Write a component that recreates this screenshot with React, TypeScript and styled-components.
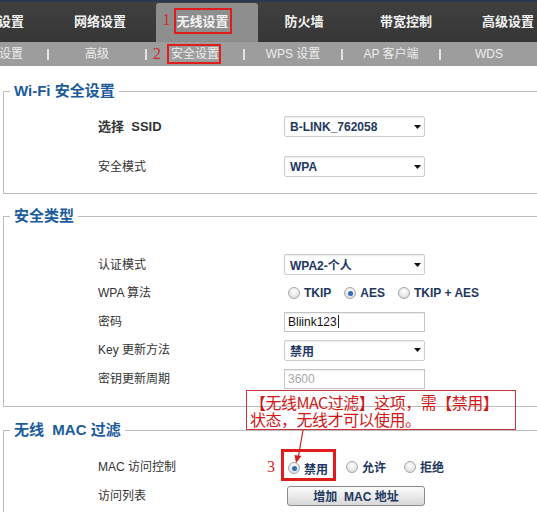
import React from "react";
import styled, { createGlobalStyle, css } from "styled-components";

const palette = {
  navy: "#1e3860",
  legend: "#1d5c9c",
  red: "#e01c1c",
  label: "#333333",
  line: "#bdbdbd",
};

const GlobalStyle = createGlobalStyle`
  body {
    margin: 0;
    background: #fff;
    font-family: "Liberation Sans", "Noto Sans CJK SC", sans-serif;
  }
`;

const Page = styled.div`
  position: relative;
  width: 537px;
  height: 512px;
  overflow: hidden;
  background: #fff;
`;

const TopNav = styled.div`
  height: 42px;
  overflow: hidden;
  background: linear-gradient(#2c3850 0, #2c3850 2px, #404040 2px, #363636 100%);
`;

const NavTrack = styled.div`
  display: flex;
  height: 100%;
  margin-left: -53px;
`;

const NavItem = styled.div<{ $active?: boolean }>`
  flex: 0 0 102px;
  box-sizing: border-box;
  margin-top: 3px;
  padding-bottom: 5px;
  display: flex;
  align-items: center;
  justify-content: center;
  color: #f2f2f2;
  font-family: "Noto Sans CJK SC", sans-serif;
  font-size: 13px;
  font-weight: 700;
  line-height: 17px;

  ${(p) =>
    p.$active &&
    css`
      margin: 3px -5px 0 5px;
      padding-right: 9px;
      background: #8e8e8e;
      border-radius: 3px 3px 0 0;
    `}
`;

const SubNav = styled.div`
  height: 24px;
  overflow: hidden;
  background: #9d9d9d;
`;

const SubTrack = styled.div`
  display: flex;
  height: 100%;
  margin-left: -50px;
`;

const SubItem = styled.div`
  position: relative;
  flex: 0 0 98px;
  display: flex;
  align-items: center;
  justify-content: center;
  color: #ededed;
  font-size: 12px;
  line-height: 16px;

  &:not(:last-child)::after {
    content: "";
    position: absolute;
    right: -1px;
    top: 7px;
    height: 11px;
    border-left: 2px solid #e4e4e4;
  }
`;

const Marked = styled.span<{ $inset: string; $width: number }>`
  position: relative;
  display: inline-block;

  &::after {
    content: "";
    position: absolute;
    inset: ${(p) => p.$inset};
    border: ${(p) => p.$width}px solid ${palette.red};
    pointer-events: none;
  }
`;

const StepNo = styled.span<{ $gap: number }>`
  position: absolute;
  right: calc(100% + ${(p) => p.$gap}px);
  top: 50%;
  transform: translateY(-50%);
  color: #d42a2a;
  font-family: "Liberation Serif", serif;
  font-size: 16px;
  font-weight: 400;
  line-height: 1;
`;

const Section = styled.fieldset<{ $top: number; $pad: string }>`
  width: 620px;
  margin: ${(p) => p.$top}px 0 0 3px;
  padding: ${(p) => p.$pad};
  border: 1px solid ${palette.line};
  border-right: none;
  min-width: 0;
`;

const Legend = styled.legend`
  padding: 0 4px;
  color: ${palette.legend};
  font-size: 15px;
  font-weight: 700;
  line-height: 20px;
`;

const Rows = styled.div<{ $gap: number }>`
  display: flex;
  flex-direction: column;
  gap: ${(p) => p.$gap}px;
  padding-left: 88px;
`;

const Row = styled.div`
  display: grid;
  grid-template-columns: 186px auto;
  align-items: center;
  min-height: 21px;
`;

const Label = styled.span<{ $bold?: boolean }>`
  color: ${palette.label};
  font-size: ${(p) => (p.$bold ? 13 : 12)}px;
  font-weight: ${(p) => (p.$bold ? 700 : 400)};
  line-height: 16px;
  white-space: pre;
`;

const SelectBox = styled.div`
  box-sizing: border-box;
  width: 141px;
  height: 21px;
  display: flex;
  align-items: center;
  justify-content: space-between;
  padding: 0 3px 0 5px;
  border: 1px solid #cdcdcd;
  border-radius: 2px;
  box-shadow: inset 0 1px 2px rgba(0, 0, 0, 0.08);
  color: ${palette.navy};
  font-size: 12px;
  font-weight: 700;
`;

const Field = styled.div<{ $disabled?: boolean }>`
  box-sizing: border-box;
  width: 141px;
  height: 20px;
  display: flex;
  align-items: center;
  padding: 0 3px;
  border: 1px solid #c4c4c4;
  box-shadow: inset 0 1px 1px rgba(0, 0, 0, 0.07);
  color: ${(p) => (p.$disabled ? "#a8a8a8" : "#111")};
  font-size: 12px;
`;

const Caret = styled.span`
  width: 1px;
  height: 13px;
  margin-left: 1px;
  background: #222;
`;

const RadioGroup = styled.div<{ $gap: number }>`
  display: flex;
  align-items: center;
  gap: ${(p) => p.$gap}px;
  padding-left: 4px;
`;

const RadioItem = styled.label`
  display: inline-flex;
  align-items: center;
  gap: 4px;
  height: 16px;
  color: ${palette.navy};
  font-size: 12px;
  font-weight: 700;
`;

const RadioDot = styled.span<{ $checked?: boolean }>`
  box-sizing: border-box;
  width: 12px;
  height: 12px;
  display: inline-flex;
  align-items: center;
  justify-content: center;
  border: 1px solid #a8a8a8;
  border-radius: 50%;
  background: radial-gradient(circle at 50% 35%, #ffffff, #d4d4d4);

  &::after {
    content: "";
    display: ${(p) => (p.$checked ? "block" : "none")};
    width: 5px;
    height: 5px;
    border-radius: 50%;
    background: #2f6cb3;
  }
`;

const AddButton = styled.button`
  width: 138px;
  height: 20px;
  margin-left: 3px;
  padding: 0;
  border: 1px solid #8c8c8c;
  border-radius: 3px;
  background: linear-gradient(#fcfcfc, #d8d8d8);
  color: ${palette.navy};
  font: 700 12px "Liberation Sans", "Noto Sans CJK SC", sans-serif;
  white-space: pre;
`;

const Note = styled.div`
  position: absolute;
  left: 246px;
  top: 390px;
  box-sizing: border-box;
  width: 270px;
  height: 40px;
  padding: 3px 0 0 3px;
  border: 1px solid #c8343c;
  color: #d01818;
  font-family: "Noto Sans CJK SC", sans-serif;
  font-size: 16px;
  line-height: 17px;
  letter-spacing: -0.5px;
  white-space: nowrap;
`;

const NoteArrow = styled.svg`
  position: absolute;
  left: 288px;
  top: 428px;
`;

const Arrow = () => (
  <svg width="7" height="4" viewBox="0 0 7 4">
    <path d="M0 0h7L3.5 4z" fill="#111" />
  </svg>
);

const Select = ({ value }: { value: string }) => (
  <SelectBox>
    <span>{value}</span>
    <Arrow />
  </SelectBox>
);

const topMenu = ["基本设置", "网络设置", "无线设置", "防火墙", "带宽控制", "高级设置"];
const subMenu = ["基本设置", "高级", "安全设置", "WPS 设置", "AP 客户端", "WDS"];

const App: React.FC = () => {
  return (
    <Page>
      <GlobalStyle />
      <TopNav>
        <NavTrack>
          {topMenu.map((item) =>
            item === "无线设置" ? (
              <NavItem key={item} $active>
                <Marked $inset="-4px -3px -5px -2px" $width={2}>
                  <StepNo $gap={6}>1</StepNo>
                  {item}
                </Marked>
              </NavItem>
            ) : (
              <NavItem key={item}>{item}</NavItem>
            )
          )}
        </NavTrack>
      </TopNav>
      <SubNav>
        <SubTrack>
          {subMenu.map((item) =>
            item === "安全设置" ? (
              <SubItem key={item}>
                <Marked $inset="-2px -2px -2px -4px" $width={2}>
                  <StepNo $gap={10}>2</StepNo>
                  {item}
                </Marked>
              </SubItem>
            ) : (
              <SubItem key={item}>{item}</SubItem>
            )
          )}
        </SubTrack>
      </SubNav>

      <Section $top={15} $pad="15px 0 16px 6px">
        <Legend>Wi-Fi 安全设置</Legend>
        <Rows $gap={19}>
          <Row>
            <Label $bold>选择  SSID</Label>
            <Select value="B-LINK_762058" />
          </Row>
          <Row>
            <Label>安全模式</Label>
            <Select value="WPA" />
          </Row>
        </Rows>
      </Section>

      <Section $top={12} $pad="28px 0 17px 6px">
        <Legend>安全类型</Legend>
        <Rows $gap={7.5}>
          <Row>
            <Label>认证模式</Label>
            <Select value="WPA2-个人" />
          </Row>
          <Row>
            <Label>WPA 算法</Label>
            <RadioGroup $gap={13}>
              <RadioItem>
                <RadioDot />
                TKIP
              </RadioItem>
              <RadioItem>
                <RadioDot $checked />
                AES
              </RadioItem>
              <RadioItem>
                <RadioDot />
                TKIP + AES
              </RadioItem>
            </RadioGroup>
          </Row>
          <Row>
            <Label>密码</Label>
            <Field>
              Bliink123
              <Caret />
            </Field>
          </Row>
          <Row>
            <Label>Key 更新方法</Label>
            <Select value="禁用" />
          </Row>
          <Row>
            <Label>密钥更新周期</Label>
            <Field $disabled>3600</Field>
          </Row>
        </Rows>
      </Section>

      <Section $top={13} $pad="16px 0 20px 6px">
        <Legend>无线&nbsp; MAC 过滤</Legend>
        <Rows $gap={8}>
          <Row>
            <Label>MAC 访问控制</Label>
            <RadioGroup $gap={18}>
              <Marked $inset="-8px -8px -5px -7px" $width={3}>
                <StepNo $gap={13}>3</StepNo>
                <RadioItem>
                  <RadioDot $checked />
                  禁用
                </RadioItem>
              </Marked>
              <RadioItem>
                <RadioDot />
                允许
              </RadioItem>
              <RadioItem>
                <RadioDot />
                拒绝
              </RadioItem>
            </RadioGroup>
          </Row>
          <Row>
            <Label>访问列表</Label>
            <div>
              <AddButton type="button">增加  MAC 地址</AddButton>
            </div>
          </Row>
        </Rows>
      </Section>

      <Note>
        <div>【无线MAC过滤】这项，需【禁用】</div>
        <div>状态，无线才可以使用。</div>
      </Note>
      <NoteArrow width="20" height="38" viewBox="0 0 20 38">
        <path d="M15 2 L10.5 28" stroke="#d02020" strokeWidth="1.2" fill="none" />
        <path d="M8 35 L6.5 27 L13.5 28 Z" fill="#d02020" />
      </NoteArrow>
    </Page>
  );
};

export default App;
